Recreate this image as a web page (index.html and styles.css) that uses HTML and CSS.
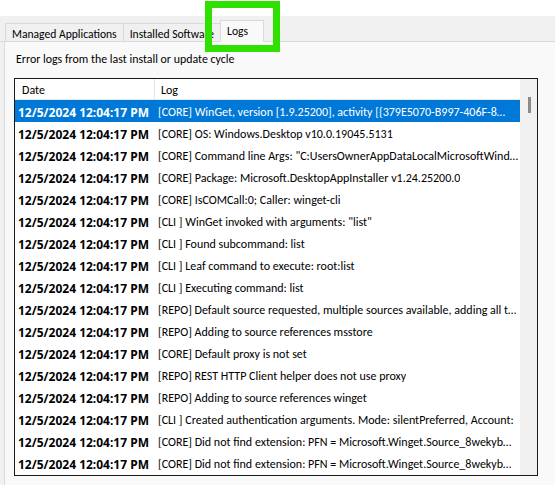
FILE: index.html
```html
<!DOCTYPE html>
<html>
<head>
<meta charset="utf-8">
<link rel="stylesheet" href="styles.css">
</head>
<body>
<div class="window">
  <div class="tabstrip">
    <div class="tab">Managed Applications</div>
    <div class="tab">Installed Software</div>
    <div class="tab active">Logs</div>
  </div>
  <div class="panel">
    <div class="caption">Error logs from the last install or update cycle</div>
    <div class="listbox">
      <div class="listmain">
        <div class="header">
          <div class="hcell hdate">Date</div>
          <div class="hcell hlog">Log</div>
        </div>
        <div class="rows">
          <div class="row selected"><span class="date">12/5/2024 12:04:17 PM</span><span class="log">[CORE] WinGet, version [1.9.25200], activity [{379E5070-B997-406F-8…</span></div>
          <div class="row"><span class="date">12/5/2024 12:04:17 PM</span><span class="log">[CORE] OS: Windows.Desktop v10.0.19045.5131</span></div>
          <div class="row"><span class="date">12/5/2024 12:04:17 PM</span><span class="log">[CORE] Command line Args: "C:UsersOwnerAppDataLocalMicrosoftWind…</span></div>
          <div class="row"><span class="date">12/5/2024 12:04:17 PM</span><span class="log">[CORE] Package: Microsoft.DesktopAppInstaller v1.24.25200.0</span></div>
          <div class="row"><span class="date">12/5/2024 12:04:17 PM</span><span class="log">[CORE] IsCOMCall:0; Caller: winget-cli</span></div>
          <div class="row"><span class="date">12/5/2024 12:04:17 PM</span><span class="log">[CLI ] WinGet invoked with arguments: "list"</span></div>
          <div class="row"><span class="date">12/5/2024 12:04:17 PM</span><span class="log">[CLI ] Found subcommand: list</span></div>
          <div class="row"><span class="date">12/5/2024 12:04:17 PM</span><span class="log">[CLI ] Leaf command to execute: root:list</span></div>
          <div class="row"><span class="date">12/5/2024 12:04:17 PM</span><span class="log">[CLI ] Executing command: list</span></div>
          <div class="row"><span class="date">12/5/2024 12:04:17 PM</span><span class="log">[REPO] Default source requested, multiple sources available, adding all t…</span></div>
          <div class="row"><span class="date">12/5/2024 12:04:17 PM</span><span class="log">[REPO] Adding to source references msstore</span></div>
          <div class="row"><span class="date">12/5/2024 12:04:17 PM</span><span class="log">[CORE] Default proxy is not set</span></div>
          <div class="row"><span class="date">12/5/2024 12:04:17 PM</span><span class="log">[REPO] REST HTTP Client helper does not use proxy</span></div>
          <div class="row"><span class="date">12/5/2024 12:04:17 PM</span><span class="log">[REPO] Adding to source references winget</span></div>
          <div class="row"><span class="date">12/5/2024 12:04:17 PM</span><span class="log">[CLI ] Created authentication arguments. Mode: silentPreferred, Account:</span></div>
          <div class="row"><span class="date">12/5/2024 12:04:17 PM</span><span class="log">[CORE] Did not find extension: PFN = Microsoft.Winget.Source_8wekyb…</span></div>
          <div class="row"><span class="date">12/5/2024 12:04:17 PM</span><span class="log">[CORE] Did not find extension: PFN = Microsoft.Winget.Source_8wekyb…</span></div>
        </div>
      </div>
      <div class="scrollbar"><div class="thumb"></div></div>
    </div>
  </div>
  <div class="highlight"></div>
</div>
</body>
</html>
```

FILE: styles.css
```css
* { box-sizing: border-box; }
html, body { margin: 0; padding: 0; background: #ffffff; }
body {
  font-family: Carlito, "Noto Sans", "Liberation Sans", sans-serif;
  font-size: 12px;
  color: #000;
}
.window {
  position: relative;
  width: 555px;
  height: 485px;
  overflow: hidden;
  display: flex;
  flex-direction: column;
  background: #f0f0f0;
}
.tabstrip {
  margin-top: 16px;
  height: 26px;
  background: #f0f0f0;
  border-bottom: 1px solid #dadada;
  box-shadow: 0 -16px 0 0 #ffffff;
  display: flex;
  align-items: flex-end;
  padding-left: 5px;
}
.tab {
  height: 19px;
  margin-bottom: -1px;
  border: 1px solid #d9d9d9;
  border-bottom: 1px solid #dadada;
  border-right: none;
  background: #f0f0f0;
  padding: 1px 6px 0 6px;
  font-size: 11.6px;
  line-height: 18px;
  white-space: nowrap;
}
.tab.active {
  height: 22px;
  background: #f9f9f9;
  border-right: 1px solid #d9d9d9;
  border-bottom-color: #f9f9f9;
  padding: 1px 15px 0 6px;
  line-height: 18px;
}
.panel {
  flex: 1;
  margin-left: 4px;
  background: #f9f9f9;
  border-left: 1px solid #dadada;
  padding: 8px 0 0 9px;
}
.caption {
  line-height: 16px;
  padding-left: 2px;
  padding-top: 1px;
  height: 16px;
  font-size: 11.9px;
}
.listbox {
  margin-top: 12px;
  width: 524px;
  height: 398px;
  border: 1px solid #1a1a1a;
  background: #ffffff;
  display: flex;
}
.listmain {
  flex: 1;
  min-width: 0;
  display: flex;
  flex-direction: column;
}
.header {
  height: 21px;
  display: flex;
  border-bottom: 1px solid #e5e5e5;
  background: #fff;
  flex: none;
}
.hcell {
  line-height: 20px;
  padding-top: 1px;
  white-space: nowrap;
}
.hdate {
  width: 140px;
  padding-left: 7px;
  border-right: 1px solid #e5e5e5;
}
.hlog { padding-left: 6px; }
.rows { display: flex; flex-direction: column; }
.row {
  height: 22px;
  padding-top: 2px;
  display: flex;
  align-items: center;
  white-space: nowrap;
  overflow: hidden;
  flex: none;
}
.row.selected { background: #0078d7; color: #ffffff; }
.date {
  font-family: "Noto Sans", "Open Sans", sans-serif;
  font-weight: 700;
  font-size: 12px;
  width: 143px;
  padding-left: 3px;
  flex: none;
}
.log {
  overflow: hidden;
  text-overflow: ellipsis;
}
.scrollbar {
  width: 17px;
  background: #f0f0f0;
  position: relative;
  flex: none;
}
.thumb {
  position: absolute;
  left: 8px;
  top: 18px;
  width: 3px;
  height: 16px;
  background: #8a8a8a;
}
.highlight {
  position: absolute;
  left: 205px;
  top: 1px;
  width: 75px;
  height: 51px;
  border: 7px solid #2fe000;
}
```
